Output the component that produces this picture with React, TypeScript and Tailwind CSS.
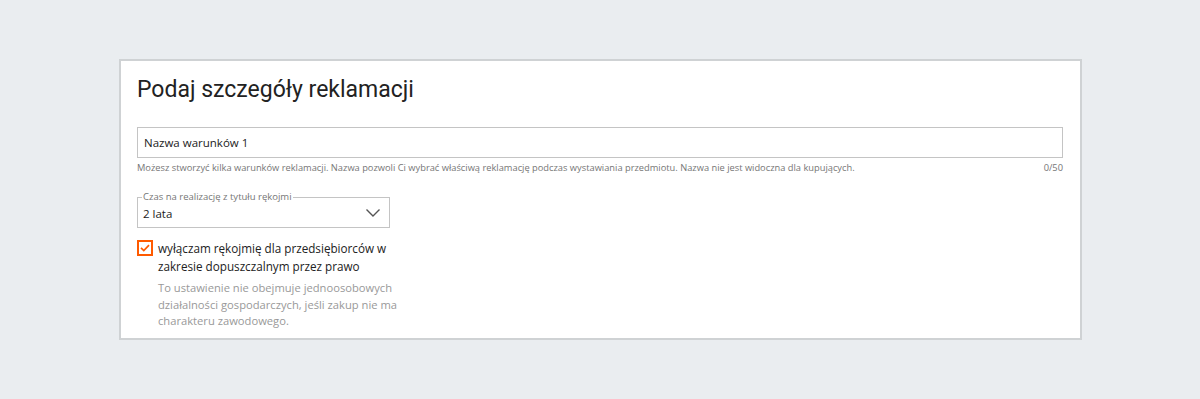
import React from "react";

export default function App() {
  return (
    <div className="w-[1200px] h-[399px] bg-[#eaedf0] pt-[59px] pl-[119px]" style={{ fontFamily: '"Open Sans", sans-serif' }}>
      <div className="w-[963px] h-[281px] bg-white border-2 border-[#cfd2d4] pl-[16px] pr-[17px]">
        <h1 className="text-[23px] leading-[30px] text-[#222] mt-[14px] font-normal" style={{ fontFamily: 'Roboto, sans-serif' }}>
          Podaj szczegóły reklamacji
        </h1>
        <div className="mt-[22px] h-[31px] border border-[#c4c4c4] flex items-center pl-[6px] text-[11.5px] text-[#222]">
          Nazwa warunków 1
        </div>
        <div className="flex justify-between mt-[3px] text-[9.3px] leading-[14px] text-[#767676]">
          <span>Możesz stworzyć kilka warunków reklamacji. Nazwa pozwoli Ci wybrać właściwą reklamację podczas wystawiania przedmiotu. Nazwa nie jest widoczna dla kupujących.</span>
          <span>0/50</span>
        </div>
        <div className="relative mt-[22px] w-[253px] h-[31px] border border-[#c4c4c4] flex items-center justify-between pl-[5px] pr-[8px]">
          <span className="absolute left-[4px] top-[-8px] bg-white px-[1px] text-[9.5px] leading-[14px] text-[#767676]">Czas na realizację z tytułu rękojmi</span>
          <span className="text-[11.5px] text-[#222] mt-[3px]">2 lata</span>
          <svg width="16" height="10" viewBox="0 0 16 10" fill="none" className="mt-[1px]">
            <path d="M1.5 1.5 L8 8 L14.5 1.5" stroke="#555" strokeWidth="1.4" />
          </svg>
        </div>
        <div className="flex mt-[11px]">
          <div className="w-[16px] h-[16px] border-2 border-[#ff5a00] flex items-center justify-center shrink-0 mt-[1px]">
            <svg width="10" height="8" viewBox="0 0 10 8" fill="none">
              <path d="M1 3.8 L3.8 6.5 L9 1.2" stroke="#ff5a00" strokeWidth="1.7" />
            </svg>
          </div>
          <div className="ml-[5px] w-[240px]">
            <div className="text-[11.7px] leading-[18px] text-[#222]">
              wyłączam rękojmię dla przedsiębiorców w zakresie dopuszczalnym przez prawo
            </div>
            <div className="mt-[5px] text-[11.2px] leading-[16.5px] text-[#999]">
              To ustawienie nie obejmuje jednoosobowych działalności gospodarczych, jeśli zakup nie ma charakteru zawodowego.
            </div>
          </div>
        </div>
      </div>
    </div>
  );
}
